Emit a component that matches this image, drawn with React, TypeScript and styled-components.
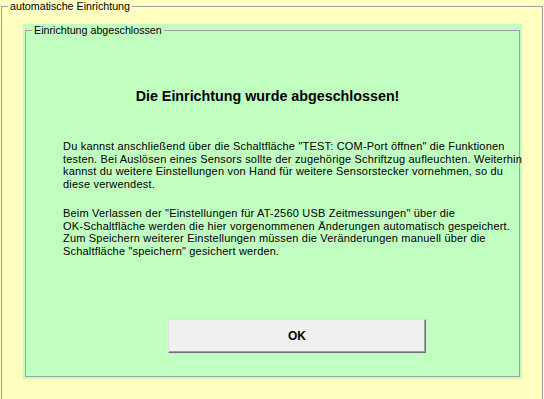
import React from 'react';
import styled, { createGlobalStyle } from 'styled-components';

const GlobalStyle = createGlobalStyle({
  'html, body': {
    margin: 0,
    padding: 0,
    background: '#FFFFC0',
    fontFamily: '"Liberation Sans", Arial, sans-serif',
    fontSize: '11px',
    color: '#000',
    overflow: 'hidden',
  },
});

const GroupBox = styled.fieldset({
  margin: 0,
  padding: 0,
  border: '1px solid #a0a0a0',
  minWidth: 0,
});

const OuterGroup = styled(GroupBox)({
  margin: '0 1px',
  height: '430px',
});

const InnerGroup = styled(GroupBox)({
  height: '351px',
});

const Caption = styled.legend({
  marginLeft: '6px',
  padding: '0 2px',
  fontSize: '10.7px',
  lineHeight: '13px',
  height: '13px',
});

const Panel = styled.div({
  background: '#C0FFC0',
  margin: '11px 0 0 21px',
  width: '499px',
  padding: '0 2px 2px',
  boxSizing: 'border-box',
});

const Headline = styled.div({
  marginTop: '51px',
  paddingRight: '10px',
  textAlign: 'center',
  fontSize: '14.3px',
  fontWeight: 'bold',
  lineHeight: '17px',
});

const Paragraph = styled.p<{ $gap: number }>((p) => ({
  margin: `${p.$gap}px 0 0 37px`,
  lineHeight: '12.5px',
  letterSpacing: '0.19px',
  whiteSpace: 'nowrap',
}));

const OkButton = styled.button({
  display: 'block',
  margin: '62px 0 0 142px',
  width: '258px',
  height: '34px',
  background: '#F0F0F0',
  border: '1px solid',
  borderColor: '#e0e0e0 #707070 #707070 #e0e0e0',
  boxShadow: 'inset -1px -1px 0 #a0a0a0',
  fontFamily: '"Liberation Sans", Arial, sans-serif',
  fontSize: '12px',
  fontWeight: 'bold',
  color: '#000',
  padding: 0,
});

export default function App() {
  return (
    <>
      <GlobalStyle />
      <OuterGroup>
        <Caption>automatische Einrichtung</Caption>
        <Panel>
          <InnerGroup>
            <Caption>Einrichtung abgeschlossen</Caption>
            <Headline>Die Einrichtung wurde abgeschlossen!</Headline>
            <Paragraph $gap={35}>
              Du kannst anschließend über die Schaltfläche "TEST: COM-Port öffnen" die Funktionen
              <br />
              testen. Bei Auslösen eines Sensors sollte der zugehörige Schriftzug aufleuchten. Weiterhin
              <br />
              kannst du weitere Einstellungen von Hand für weitere Sensorstecker vornehmen, so du
              <br />
              diese verwendest.
            </Paragraph>
            <Paragraph $gap={17}>
              Beim Verlassen der "Einstellungen für AT-2560 USB Zeitmessungen" über die
              <br />
              OK-Schaltfläche werden die hier vorgenommenen Änderungen automatisch gespeichert.
              <br />
              Zum Speichern weiterer Einstellungen müssen die Veränderungen manuell über die
              <br />
              Schaltfläche "speichern" gesichert werden.
            </Paragraph>
            <OkButton>OK</OkButton>
          </InnerGroup>
        </Panel>
      </OuterGroup>
    </>
  );
}
